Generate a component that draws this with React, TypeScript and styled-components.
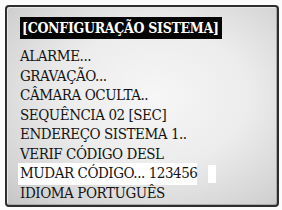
import styled, { createGlobalStyle } from 'styled-components';

const GlobalStyle = createGlobalStyle`
  html, body {
    margin: 0;
    padding: 0;
    background: #fbfbfb;
  }
`;

const Page = styled.div`
  width: 282px;
  height: 210px;
  padding: 5px 3px 3px 5px;
  box-sizing: border-box;
`;

const Screen = styled.div`
  width: 274px;
  height: 202px;
  box-sizing: border-box;
  border: 2px solid #2e2e2e;
  border-radius: 4px;
  background: radial-gradient(ellipse at 55% 45%, #f6f6f6 0%, #ececec 45%, #d2d2d2 85%, #c4c4c4 100%);
  box-shadow: inset 1px 1px 0 #e6e6e6, inset -1px -1px 0 #a8a8a8;
  padding: 10px 10px 0 13px;
  display: flex;
  flex-direction: column;
  font-family: "DejaVu Serif Condensed", "DejaVu Serif", serif;
  font-stretch: condensed;
  color: #141414;
`;

const Title = styled.div`
  align-self: flex-start;
  background: #050505;
  color: #fff;
  font-weight: bold;
  font-size: 14px;
  line-height: 22px;
  padding: 0 3px 0 2px;
  letter-spacing: -0.3px;
  margin-bottom: 8px;
`;

const Menu = styled.div`
  display: flex;
  flex-direction: column;
`;

const Row = styled.div`
  display: flex;
  align-items: center;
  font-size: 15px;
  line-height: 19.5px;
  height: 19.5px;
  letter-spacing: -0.45px;
  white-space: nowrap;
`;

const Label = styled.span<{ $active?: boolean }>`
  padding: 1px 0 1px 2px;
  margin-left: -2px;
  background: ${(p) => (p.$active ? '#ffffff' : 'transparent')};
`;

const Cursor = styled.span`
  display: inline-block;
  width: 8px;
  height: 18px;
  margin-left: 11px;
  background: #ffffff;
`;

const items = [
  'ALARME...',
  'GRAVAÇÃO...',
  'CÂMARA OCULTA..',
  'SEQUÊNCIA 02 [SEC]',
  'ENDEREÇO SISTEMA 1..',
  'VERIF CÓDIGO DESL',
  'MUDAR CÓDIGO... 123456',
  'IDIOMA PORTUGUÊS',
];

export default function App() {
  return (
    <>
      <GlobalStyle />
      <Page>
        <Screen>
          <Title>[CONFIGURAÇÃO SISTEMA]</Title>
          <Menu>
            {items.map((item, i) => {
              const active = i === 6;
              return (
                <Row key={item}>
                  <Label $active={active}>{item}</Label>
                  {active && <Cursor />}
                </Row>
              );
            })}
          </Menu>
        </Screen>
      </Page>
    </>
  );
}
